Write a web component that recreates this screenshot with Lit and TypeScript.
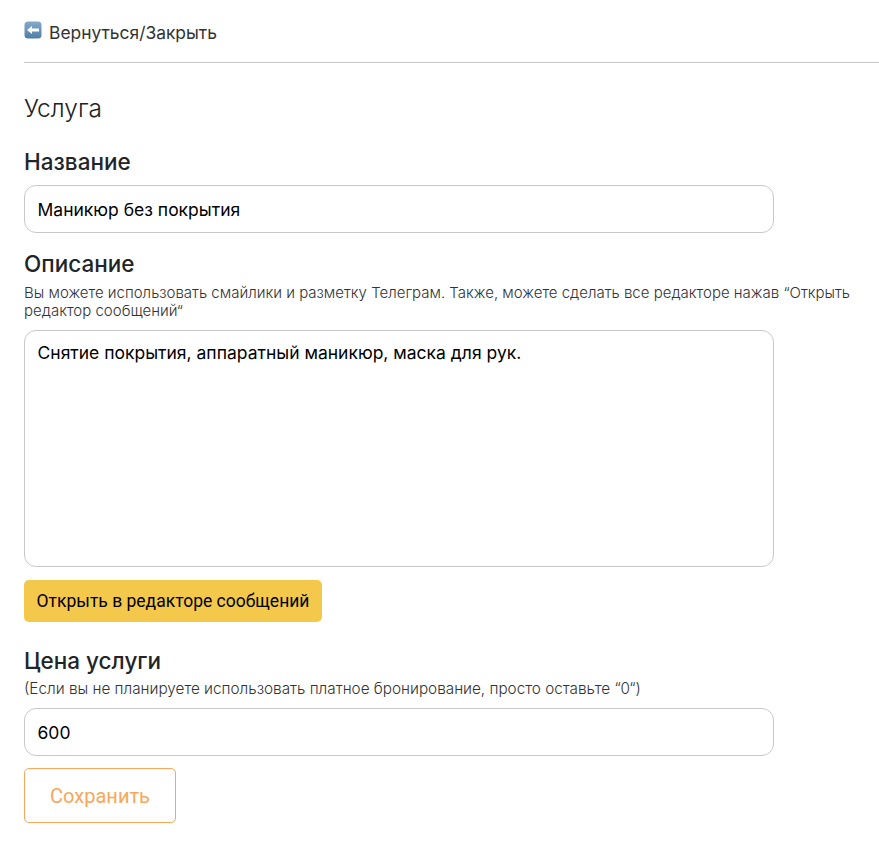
import { LitElement, html, css } from "lit";
import { customElement } from "lit/decorators.js";

@customElement("app-root")
export class AppRoot extends LitElement {
  static styles = css`
    :host { display: block; font-family: Inter, "Noto Sans", sans-serif; color: #212529; background: #fff; height: 850px; overflow: hidden; }
    * { box-sizing: border-box; }
    .page { padding: 0 0 0 24px; display: flex; flex-direction: column; }
    .back { display: flex; align-items: center; gap: 7px; height: 63px; padding-top: 2px; border-bottom: 1px solid #c8c8c8; font-size: 17.4px; color: #333; }
    .back svg { display: block; margin-top: -4px; }
    .title { font-size: 24.5px; font-weight: 300; margin-top: 31px; line-height: 29px; color: #222; }
    .label { font-size: 22.5px; font-weight: 500; line-height: 27px; }
    .mt-name { margin-top: 25px; }
    .mt-desc { margin-top: 17px; }
    .mt-price { margin-top: 25px; }
    .hint { line-height: 18px; color: #333; font-weight: 300; }
    .hint-desc { font-size: 15px; margin-top: 7px; }
    .hint-price { font-size: 15.3px; margin-top: 6px; }
    .field { width: 750px; border: 1px solid #c8c8c8; border-radius: 12px; background: #fff; padding: 0 12.5px; font-size: 17.5px; color: #000; display: flex; align-items: center; height: 48px; }
    .mt-f1 { margin-top: 10px; }
    .mt-f2 { margin-top: 10px; }
    .area { height: 237px; align-items: flex-start; padding-top: 8px; line-height: 28px; margin-top: 10px; }
    .yellow { align-self: flex-start; margin-top: 13px; width: 298px; height: 42px; border-radius: 5px; background: #f3c84b; font-family: Roboto, sans-serif; font-size: 17.5px; color: #000; display: flex; align-items: center; justify-content: center; }
    .save { align-self: flex-start; margin-top: 12px; width: 152px; height: 55px; border: 1px solid #f9a65a; border-radius: 5px; color: #f9a65a; font-family: Roboto, sans-serif; font-size: 20px; display: flex; align-items: center; justify-content: center; }
  `;
  render() {
    return html`<div class="page">
      <div class="back">
        <svg width="18" height="18" viewBox="0 0 18 18"><defs><linearGradient id="g" x1="0" y1="0" x2="0" y2="1"><stop offset="0" stop-color="#86abcc"/><stop offset="1" stop-color="#4f7da6"/></linearGradient></defs><rect x="0.5" y="0.5" width="17" height="17" rx="3.5" fill="url(#g)"/><path d="M3 9 L8 5 V7.5 H15 V10.5 H8 V13 Z" fill="#fff"/></svg>
        <span>Вернуться/Закрыть</span>
      </div>
      <div class="title">Услуга</div>
      <div class="label mt-name">Название</div>
      <div class="field mt-f1">Маникюр без покрытия</div>
      <div class="label mt-desc">Описание</div>
      <div class="hint hint-desc">Вы можете использовать смайлики и разметку Телеграм. Также, можете сделать все редакторе нажав “Открыть редактор сообщений“</div>
      <div class="field area">Снятие покрытия, аппаратный маникюр, маска для рук.</div>
      <div class="yellow">Открыть в редакторе сообщений</div>
      <div class="label mt-price">Цена услуги</div>
      <div class="hint hint-price">(Если вы не планируете использовать платное бронирование, просто оставьте “0“)</div>
      <div class="field mt-f2">600</div>
      <div class="save">Сохранить</div>
    </div>`;
  }
}
